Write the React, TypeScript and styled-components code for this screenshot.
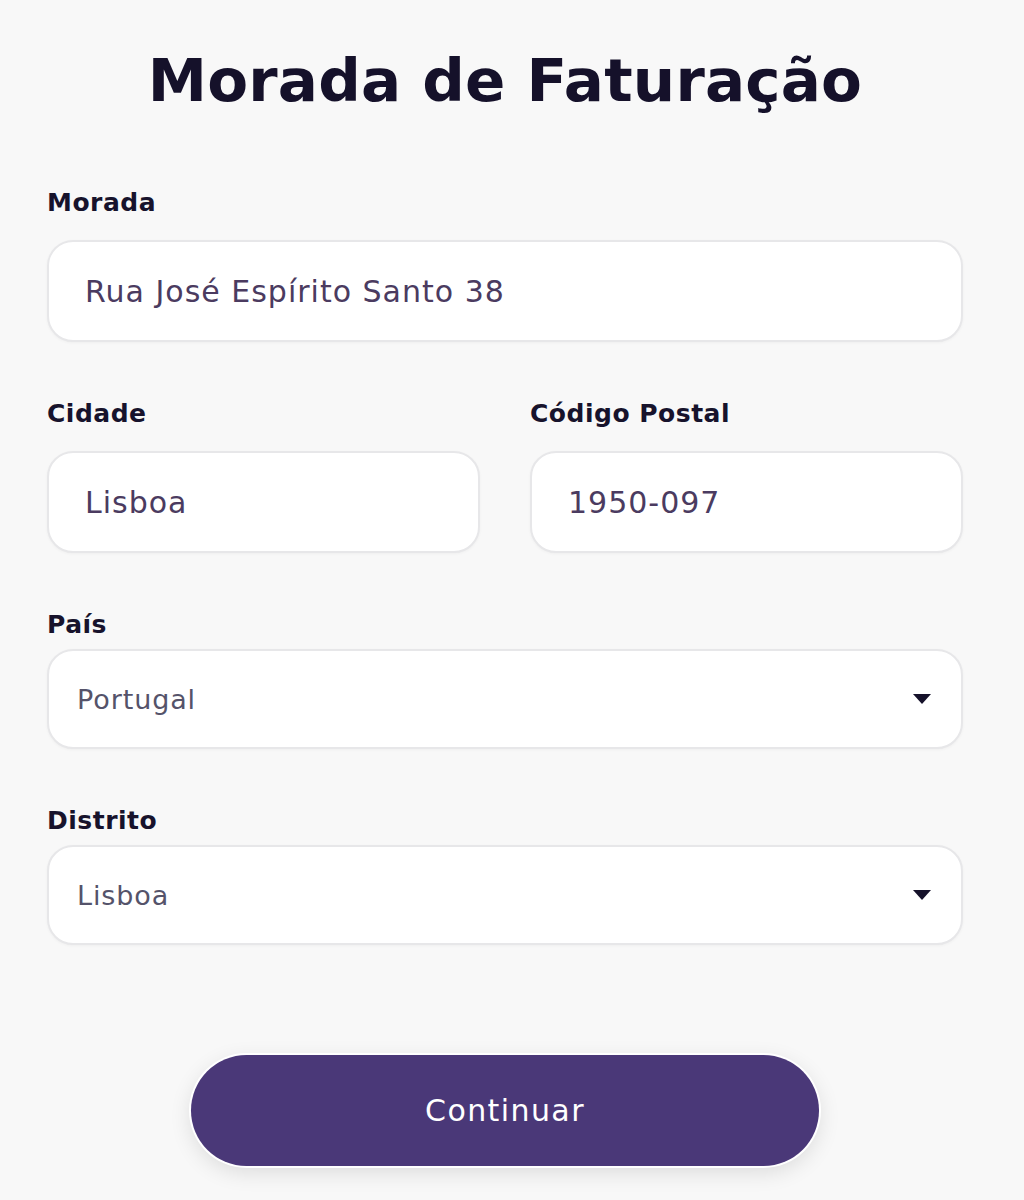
import React from "react";
import styled, { createGlobalStyle } from "styled-components";

const GlobalStyle = createGlobalStyle`
  html, body {
    margin: 0;
    padding: 0;
    background: #f8f8f8;
  }
  body {
    font-family: "DejaVu Sans", "Noto Sans", sans-serif;
    -webkit-font-smoothing: antialiased;
  }
  * { box-sizing: border-box; }
`;

const Page = styled.main`
  width: 1024px;
  min-height: 1200px;
  background: #f8f8f8;
  padding: 45px 61px 0 47px;
`;

const Title = styled.h1`
  margin: 0 0 71px;
  font-size: 59.5px;
  line-height: 72px;
  font-weight: 700;
  color: #15112a;
  text-align: center;
  letter-spacing: 0.2px;
`;

const Form = styled.form`
  display: flex;
  flex-direction: column;
  gap: 57px;
`;

const Row = styled.div`
  display: grid;
  grid-template-columns: 1fr 1fr;
  column-gap: 50px;
`;

const Field = styled.div`
  display: flex;
  flex-direction: column;
`;

const Label = styled.label<{ $tight?: boolean }>`
  display: block;
  font-size: 25px;
  line-height: 30px;
  font-weight: 700;
  letter-spacing: 0.5px;
  color: #17132c;
  margin-bottom: ${(p) => (p.$tight ? "9px" : "22px")};
`;

const TextBox = styled.input`
  display: block;
  width: 100%;
  height: 102px;
  padding: 0 36px;
  border: 2px solid #e7e7e9;
  border-radius: 26px;
  background: #ffffff;
  box-shadow: 0 1px 3px rgba(0, 0, 0, 0.04);
  font-family: "DejaVu Sans", "Noto Sans", sans-serif;
  font-size: 30px;
  letter-spacing: 1px;
  color: #4b3b60;
  outline: none;
`;

const SelectBox = styled.div`
  display: flex;
  align-items: center;
  justify-content: space-between;
  height: 100px;
  padding: 0 30px 0 28px;
  border: 2px solid #e7e7e9;
  border-radius: 26px;
  background: #ffffff;
  box-shadow: 0 1px 3px rgba(0, 0, 0, 0.04);
  cursor: pointer;
`;

const SelectValue = styled.span`
  font-size: 27px;
  letter-spacing: 0.9px;
  color: #55536a;
`;

const Caret = styled.svg`
  width: 18px;
  height: 10px;
  flex: none;
`;

const Actions = styled.div`
  display: flex;
  justify-content: center;
  padding-top: 53px;
`;

const Button = styled.button`
  width: 628px;
  height: 111px;
  border: none;
  border-radius: 56px;
  background: #4a3878;
  color: #ffffff;
  font-family: "DejaVu Sans", "Noto Sans", sans-serif;
  font-size: 30px;
  letter-spacing: 1.4px;
  box-shadow: 0 0 0 2px #ffffff, 0 6px 22px rgba(0, 0, 0, 0.12);
  cursor: pointer;
`;

function Select({ value }: { value: string }) {
  return (
    <SelectBox role="combobox" aria-expanded={false}>
      <SelectValue>{value}</SelectValue>
      <Caret viewBox="0 0 18 10" aria-hidden="true">
        <path d="M0 0 L18 0 L9 10 Z" fill="#15112a" />
      </Caret>
    </SelectBox>
  );
}

export default function App() {
  return (
    <>
      <GlobalStyle />
      <Page>
        <Title>Morada de Faturação</Title>
        <Form onSubmit={(e) => e.preventDefault()}>
          <Field>
            <Label htmlFor="morada">Morada</Label>
            <TextBox id="morada" defaultValue="Rua José Espírito Santo 38" />
          </Field>
          <Row>
            <Field>
              <Label htmlFor="cidade">Cidade</Label>
              <TextBox id="cidade" defaultValue="Lisboa" />
            </Field>
            <Field>
              <Label htmlFor="cp">Código Postal</Label>
              <TextBox id="cp" defaultValue="1950-097" />
            </Field>
          </Row>
          <Field>
            <Label $tight>País</Label>
            <Select value="Portugal" />
          </Field>
          <Field>
            <Label $tight>Distrito</Label>
            <Select value="Lisboa" />
          </Field>
          <Actions>
            <Button type="submit">Continuar</Button>
          </Actions>
        </Form>
      </Page>
    </>
  );
}
